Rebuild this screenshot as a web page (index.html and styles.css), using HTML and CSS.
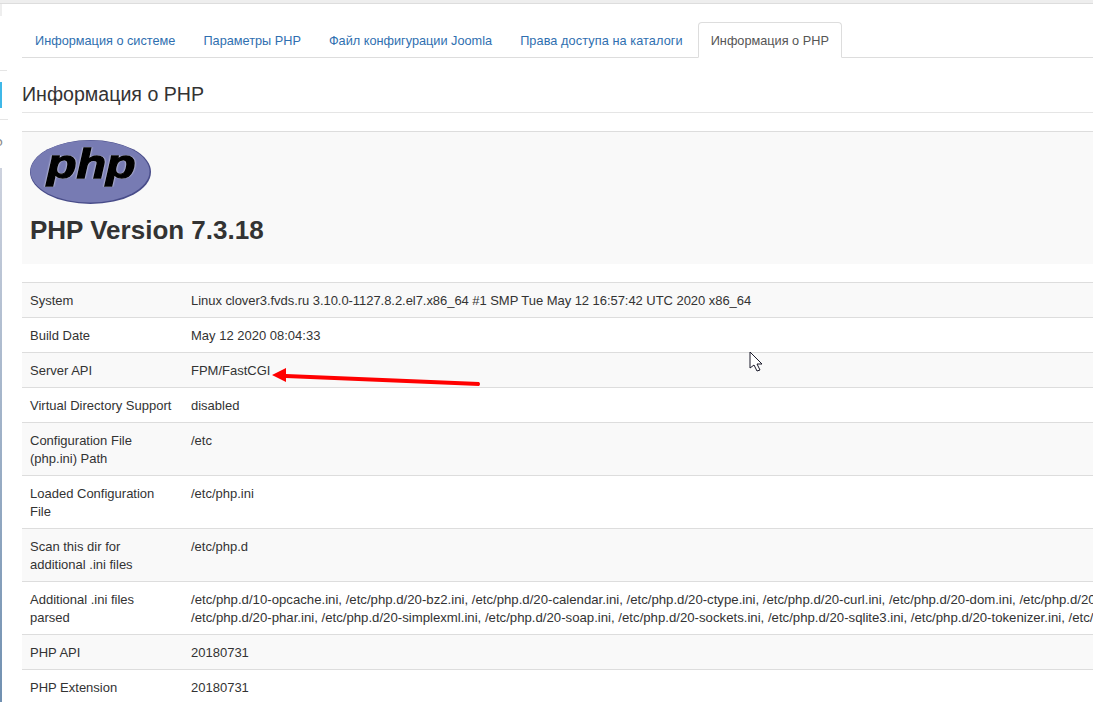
FILE: index.html
```html
<!DOCTYPE html>
<html lang="ru">
<head>
<meta charset="utf-8">
<title>Информация о PHP</title>
<link rel="stylesheet" href="styles.css">
</head>
<body>
<div class="topbar"></div>
<div class="layout">
  <aside class="rail">
    <div class="rail-top"></div>
    <div class="rail-item"></div>
    <div class="rail-active"></div>
    <div class="rail-glyph">Ф</div>
    <div class="rail-wall"></div>
  </aside>
  <main class="content">
    <ul class="tabs">
      <li class="tab">Информация о системе</li>
      <li class="tab">Параметры PHP</li>
      <li class="tab">Файл конфигурации Joomla</li>
      <li class="tab tab-wide">Права доступа на каталоги</li>
      <li class="tab tab-active">Информация о PHP</li>
    </ul>
    <h2 class="title">Информация о PHP</h2>
    <section class="phpinfo">
      <header class="banner">
        <svg class="logo" width="121" height="65" viewBox="0 0 121 65" xmlns="http://www.w3.org/2000/svg" aria-label="PHP">
          <ellipse cx="60.5" cy="32" rx="60.5" ry="32" fill="#484c89"/>
          <ellipse cx="60" cy="31.500" rx="59.500" ry="31" fill="#777bb3"/>
          <text class="logo-text" transform="translate(17 38) scale(1.18 1)">php</text>
        </svg>
        <h1 class="version">PHP Version 7.3.18</h1>
      </header>
      <table class="info">
        <tbody>
          <tr><td class="key">System</td><td class="val tight">Linux clover3.fvds.ru 3.10.0-1127.8.2.el7.x86_64 #1 SMP Tue May 12 16:57:42 UTC 2020 x86_64</td></tr>
          <tr><td class="key">Build Date</td><td class="val">May 12 2020 08:04:33</td></tr>
          <tr><td class="key">Server API</td><td class="val">FPM/FastCGI</td></tr>
          <tr><td class="key">Virtual Directory Support</td><td class="val">disabled</td></tr>
          <tr><td class="key">Configuration File (php.ini) Path</td><td class="val">/etc</td></tr>
          <tr><td class="key">Loaded Configuration File</td><td class="val">/etc/php.ini</td></tr>
          <tr><td class="key">Scan this dir for additional .ini files</td><td class="val">/etc/php.d</td></tr>
          <tr><td class="key">Additional .ini files parsed</td><td class="val"><div class="nowrap">/etc/php.d/10-opcache.ini, /etc/php.d/20-bz2.ini, /etc/php.d/20-calendar.ini, /etc/php.d/20-ctype.ini, /etc/php.d/20-curl.ini, /etc/php.d/20-dom.ini, /etc/php.d/20-exif.ini,</div><div class="nowrap">/etc/php.d/20-phar.ini, /etc/php.d/20-simplexml.ini, /etc/php.d/20-soap.ini, /etc/php.d/20-sockets.ini, /etc/php.d/20-sqlite3.ini, /etc/php.d/20-tokenizer.ini, /etc/php.d/20-xml.ini,</div></td></tr>
          <tr><td class="key">PHP API</td><td class="val">20180731</td></tr>
          <tr><td class="key">PHP Extension</td><td class="val">20180731</td></tr>
        </tbody>
      </table>
    </section>
  </main>
</div>
<svg class="arrow" width="212" height="22" viewBox="0 0 212 22" xmlns="http://www.w3.org/2000/svg" aria-hidden="true">
  <path d="M0 8 L14 1 L14 7 L207 15 Q209 17 207 19 L14 11 L14 15 Z" fill="#f00"/>
</svg>
<svg class="cursor" width="16" height="22" viewBox="0 0 16 22" xmlns="http://www.w3.org/2000/svg" aria-hidden="true">
  <path d="M1 1 L1 17 L5 14 L8 20 L11 19 L8 13 L13 13 Z" fill="#fff" stroke="#1a1a2a" stroke-width="1"/>
</svg>
</body>
</html>
```
FILE: styles.css
```css
html, body {
  margin: 0;
  padding: 0;
  height: 702px;
  overflow: hidden;
  background: #fff;
  font-family: "Liberation Sans", Arial, sans-serif;
  color: #333;
}
.topbar {
  height: 3px;
  background: #eee;
  border-bottom: 1px solid #ddd;
}
.layout {
  display: flex;
  width: 1093px;
  overflow: hidden;
}
.rail {
  flex: 0 0 22px;
  width: 22px;
  display: flex;
  flex-direction: column;
  overflow: hidden;
}
.rail-top {
  width: 2px;
  height: 12px;
  background: #eee;
}
.rail-item {
  height: 54px;
  margin-right: 15px;
  border-bottom: 1px solid #e5e5e5;
}
.rail-active {
  width: 2px;
  height: 26px;
  background: #3fb8e8;
  margin-top: 11px;
}
.rail-glyph {
  height: 48px;
  font-size: 13px;
  color: #888;
  margin-left: -7px;
  margin-top: 11px;
  margin-right: 14px;
  padding-left: 7px;
  text-indent: -7px;
  border-top: 1px solid #e5e5e5;
  line-height: 46px;
}
.rail-wall {
  width: 2px;
  height: 540px;
  background: linear-gradient(#cdd2de, #6f8fb0);
}
.content {
  flex: 1;
  min-width: 0;
}
.tabs {
  list-style: none;
  margin: 18px 0 0;
  padding: 0;
  display: flex;
  height: 35px;
  border-bottom: 1px solid #ddd;
}
.tab {
  font-size: 12.72px;
  line-height: 18px;
  color: #2f6fb0;
  padding: 9px 12px 8px;
  margin-right: 2px;
  white-space: nowrap;
  border: 1px solid transparent;
  height: 36px;
  box-sizing: border-box;
}
.tab-wide {
  letter-spacing: 0.08px;
}
.tab-active {
  color: #555;
  background: #fff;
  border-color: #ddd;
  border-bottom-color: #fff;
  border-radius: 4px 4px 0 0;
}
.title {
  margin: 0;
  font-size: 19.6px;
  font-weight: 400;
  line-height: 28px;
  padding: 22px 0 4px;
  height: 55px;
  box-sizing: border-box;
  border-bottom: 1px solid #e5e5e5;
}
.phpinfo {
  margin-top: 18px;
}
.banner {
  background: #f9f9f9;
  border-top: 1px solid #ddd;
  height: 133px;
  padding: 8px 8px 0;
  box-sizing: border-box;
  margin-bottom: 18px;
}
.logo {
  display: block;
}
.logo-text {
  font-family: "Liberation Sans", Arial, sans-serif;
  font-size: 41px;
  font-weight: 700;
  font-style: italic;
  fill: #000;
  stroke: #000;
  stroke-width: 1.3px;
  filter: drop-shadow(0 0 0.7px #fff);
}
.version {
  margin: 7px 0 0;
  font-size: 26px;
  font-weight: 700;
  line-height: 36px;
  color: #333;
}
.info {
  width: 1500px;
  border-collapse: collapse;
  table-layout: fixed;
  font-size: 13px;
  line-height: 18px;
}
.info td {
  padding: 9px 8px 7px;
  vertical-align: top;
  border-top: 1px solid #ddd;
}
.info tr:nth-child(odd) td {
  background: #f9f9f9;
}
.key {
  width: 145px;
}
.tight {
  letter-spacing: -0.05px;
}
.nowrap {
  font-size: 13.2px;
  white-space: nowrap;
}
.arrow {
  position: absolute;
  left: 272px;
  top: 367px;
}
.cursor {
  position: absolute;
  left: 749px;
  top: 351px;
}
```
